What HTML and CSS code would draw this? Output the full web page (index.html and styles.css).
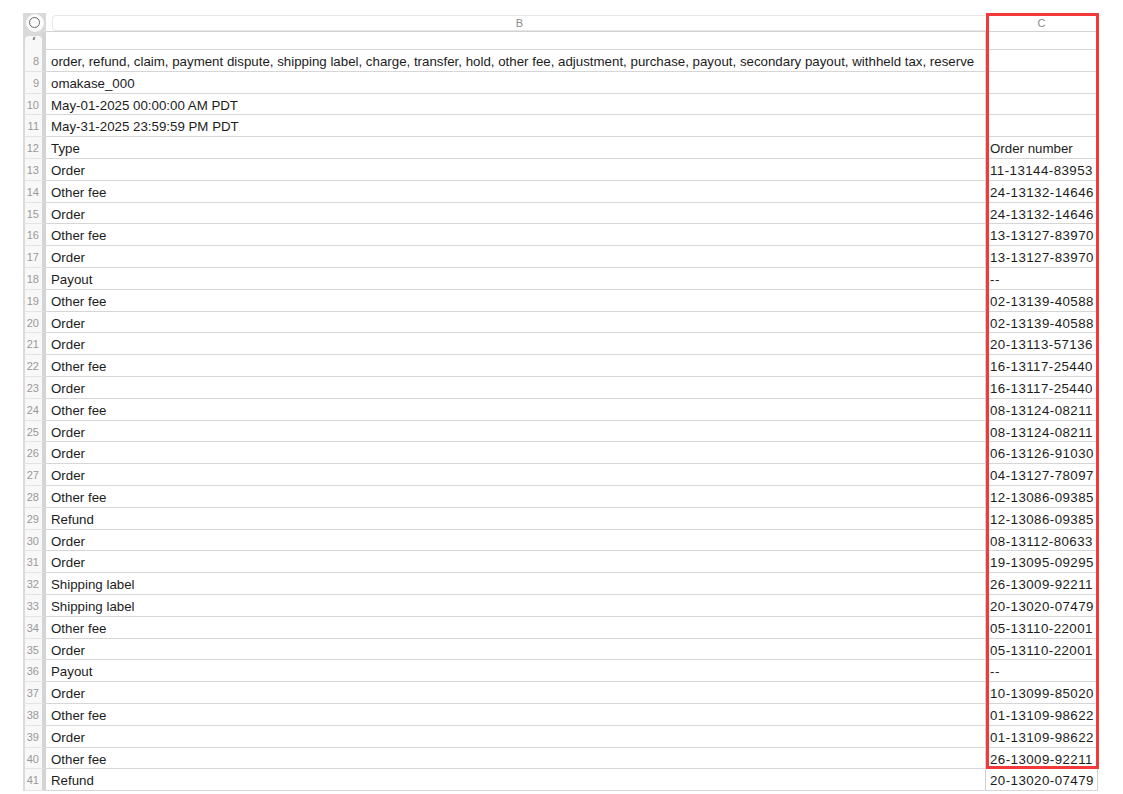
FILE: index.html
```html
<!DOCTYPE html>
<html lang="en">
<head>
  <meta charset="UTF-8" />
  <title>Sheet – Column C</title>
  <link rel="stylesheet" href="styles.css">
</head>
<body>
  <div class="sheet">
    <div class="row head">
      <div class="num corner"><span class="ring"></span></div>
      <div class="b"><span class="tab">B</span></div>
      <div class="c">C</div>
    </div>
    <div class="row short">
      <div class="num first"><span class="tick"></span></div>
      <div class="b"></div>
      <div class="c"></div>
    </div>
    <div class="row"><div class="num">8</div><div class="b">order, refund, claim, payment dispute, shipping label, charge, transfer, hold, other fee, adjustment, purchase, payout, secondary payout, withheld tax, reserve</div><div class="c"></div></div>
    <div class="row"><div class="num">9</div><div class="b">omakase_000</div><div class="c"></div></div>
    <div class="row"><div class="num">10</div><div class="b">May-01-2025 00:00:00 AM PDT</div><div class="c"></div></div>
    <div class="row"><div class="num">11</div><div class="b">May-31-2025 23:59:59 PM PDT</div><div class="c"></div></div>
    <div class="row"><div class="num">12</div><div class="b">Type</div><div class="c label">Order number</div></div>
    <div class="row"><div class="num">13</div><div class="b">Order</div><div class="c">11-13144-83953</div></div>
    <div class="row"><div class="num">14</div><div class="b">Other fee</div><div class="c">24-13132-14646</div></div>
    <div class="row"><div class="num">15</div><div class="b">Order</div><div class="c">24-13132-14646</div></div>
    <div class="row"><div class="num">16</div><div class="b">Other fee</div><div class="c">13-13127-83970</div></div>
    <div class="row"><div class="num">17</div><div class="b">Order</div><div class="c">13-13127-83970</div></div>
    <div class="row"><div class="num">18</div><div class="b">Payout</div><div class="c">--</div></div>
    <div class="row"><div class="num">19</div><div class="b">Other fee</div><div class="c">02-13139-40588</div></div>
    <div class="row"><div class="num">20</div><div class="b">Order</div><div class="c">02-13139-40588</div></div>
    <div class="row"><div class="num">21</div><div class="b">Order</div><div class="c">20-13113-57136</div></div>
    <div class="row"><div class="num">22</div><div class="b">Other fee</div><div class="c">16-13117-25440</div></div>
    <div class="row"><div class="num">23</div><div class="b">Order</div><div class="c">16-13117-25440</div></div>
    <div class="row"><div class="num">24</div><div class="b">Other fee</div><div class="c">08-13124-08211</div></div>
    <div class="row"><div class="num">25</div><div class="b">Order</div><div class="c">08-13124-08211</div></div>
    <div class="row"><div class="num">26</div><div class="b">Order</div><div class="c">06-13126-91030</div></div>
    <div class="row"><div class="num">27</div><div class="b">Order</div><div class="c">04-13127-78097</div></div>
    <div class="row"><div class="num">28</div><div class="b">Other fee</div><div class="c">12-13086-09385</div></div>
    <div class="row"><div class="num">29</div><div class="b">Refund</div><div class="c">12-13086-09385</div></div>
    <div class="row"><div class="num">30</div><div class="b">Order</div><div class="c">08-13112-80633</div></div>
    <div class="row"><div class="num">31</div><div class="b">Order</div><div class="c">19-13095-09295</div></div>
    <div class="row"><div class="num">32</div><div class="b">Shipping label</div><div class="c">26-13009-92211</div></div>
    <div class="row"><div class="num">33</div><div class="b">Shipping label</div><div class="c">20-13020-07479</div></div>
    <div class="row"><div class="num">34</div><div class="b">Other fee</div><div class="c">05-13110-22001</div></div>
    <div class="row"><div class="num">35</div><div class="b">Order</div><div class="c">05-13110-22001</div></div>
    <div class="row"><div class="num">36</div><div class="b">Payout</div><div class="c">--</div></div>
    <div class="row"><div class="num">37</div><div class="b">Order</div><div class="c">10-13099-85020</div></div>
    <div class="row"><div class="num">38</div><div class="b">Other fee</div><div class="c">01-13109-98622</div></div>
    <div class="row"><div class="num">39</div><div class="b">Order</div><div class="c">01-13109-98622</div></div>
    <div class="row"><div class="num">40</div><div class="b">Other fee</div><div class="c">26-13009-92211</div></div>
    <div class="row"><div class="num">41</div><div class="b">Refund</div><div class="c">20-13020-07479</div></div>

    <!-- highlight drawn over column C -->
    <div class="highlight"></div>
  </div>
</body>
</html>
```

FILE: styles.css
```css
* { box-sizing: border-box; margin: 0; padding: 0; }
html, body { height: 100%; overflow: hidden; }
body {
  background: #fff;
  font-family: 'Liberation Sans', Arial, sans-serif;
  color: #1c1c1c;
}
.sheet {
  position: relative;
  margin: 13px 0 0 23px;
  width: 1076px;
}
.row {
  display: flex;
  height: 21.8px;
  font-size: 13.3px;
  line-height: 21px;
}
.num {
  width: 23px;
  flex: none;
  background: #f8f8f8;
  border-left: 2px solid #dadada;
  border-right: 4px solid #d4d4d4;
  border-bottom: 1px solid #e4e4e4;
  color: #999;
  font-size: 11px;
  text-align: right;
  padding-right: 3px;
  padding-top: 1px;
}
.b {
  width: 940px;
  flex: none;
  padding: 1px 0 0 5px;
  border-right: 1px solid #d0d0d0;
  border-bottom: 1px solid #d6d6d6;
  white-space: nowrap;
  overflow: hidden;
}
.c {
  width: 112px;
  flex: none;
  padding: 1px 0 0 4px;
  border-right: 1px solid #d6d6d6;
  border-bottom: 1px solid #d6d6d6;
  white-space: nowrap;
  letter-spacing: 0.45px;
}
.c.label { letter-spacing: 0; }

/* column header row */
.head { height: 19px; }
.head .num {
  background: #d9d9d9;
  border: none;
  display: flex;
  align-items: center;
  justify-content: center;
  padding: 0;
}
.ring {
  width: 18px; height: 18px;
  border-radius: 50%;
  background: #fbfbfb;
  display: flex;
  align-items: center;
  justify-content: center;
}
.ring::after {
  content: '';
  width: 9px; height: 9px;
  border: 1.3px solid #6a6a6a;
  border-radius: 50%;
}
.head .b {
  padding: 2px 0 0 6px;
  border-right: none;
  border-bottom: 1px solid #d2d2d2;
}
.tab {
  display: block;
  height: 16px;
  border: 1px solid #e6e6e6;
  border-right: none;
  border-radius: 4px 0 0 4px;
  text-align: center;
  font-size: 11px;
  line-height: 15px;
  color: #8a8a8a;
}
.head .c {
  border-top: 2px solid #ececec;
  border-bottom: 1px solid #d2d2d2;
  text-align: center;
  font-size: 11px;
  line-height: 16px;
  color: #8a8a8a;
  letter-spacing: 0;
  padding: 0;
}

/* half-hidden row 7 */
.short { height: 18px; }
.short .num {
  background: #d9d9d9;
  padding: 0;
  border-left-color: #d9d9d9;
  border-bottom: none;
  position: relative;
}
.short .num::before {
  content: '';
  position: absolute;
  left: 0; right: 0; top: 4px; bottom: 0;
  background: #f8f8f8;
  border-radius: 4px 4px 0 0;
}
.tick {
  position: absolute;
  left: 8px; top: 5px;
  width: 2px; height: 3px;
  background: #888;
  transform: skewX(-15deg);
  z-index: 1;
}

.highlight {
  position: absolute;
  left: 963px;
  top: 0;
  width: 113px;
  height: 756px;
  border: 3px solid #f23a3a;
  pointer-events: none;
}
```
